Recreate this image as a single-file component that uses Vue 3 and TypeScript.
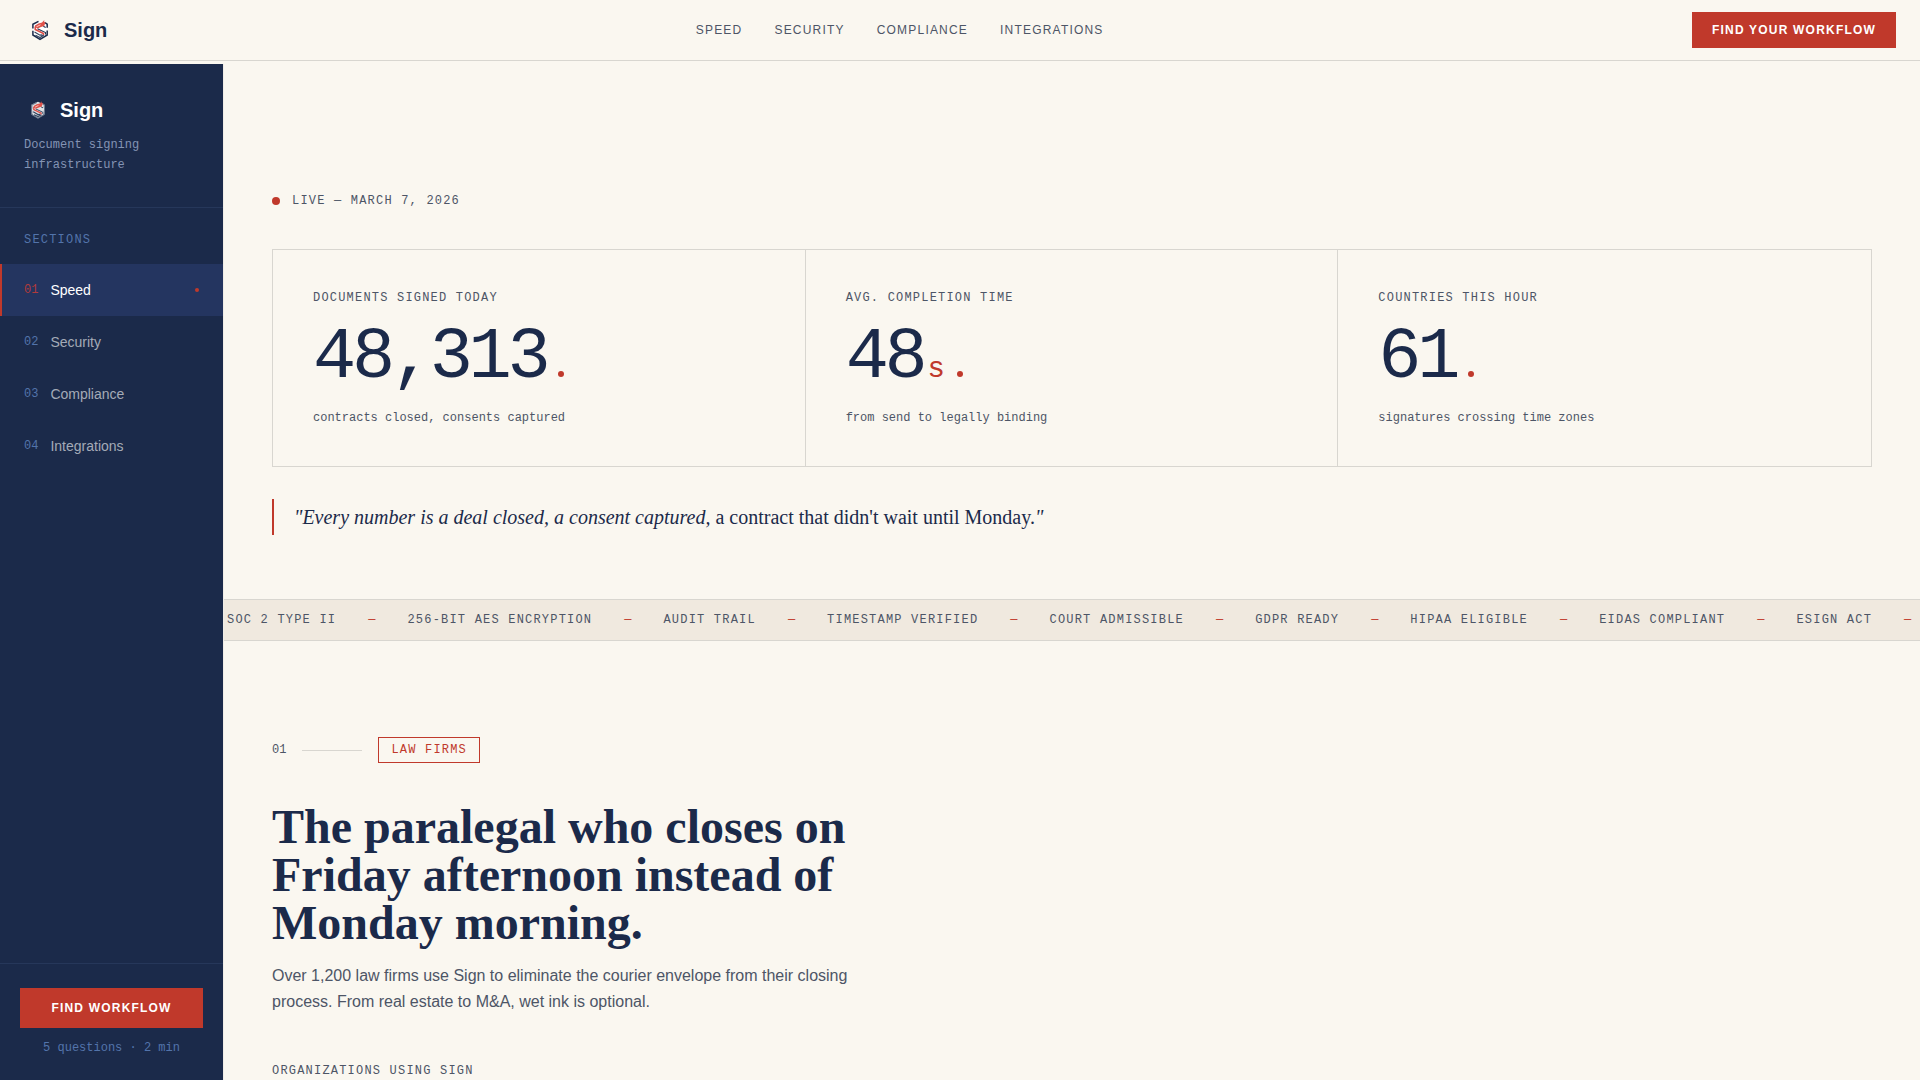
<script setup lang="ts">
interface Section {
  id: string
  num: string
  label: string
}

interface Stat {
  label: string
  value: string
  unit?: string
  note: string
}

const sections: Section[] = [
  { id: 'speed', num: '01', label: 'Speed' },
  { id: 'security', num: '02', label: 'Security' },
  { id: 'compliance', num: '03', label: 'Compliance' },
  { id: 'integrations', num: '04', label: 'Integrations' },
]

const activeId = 'speed'

const stats: Stat[] = [
  { label: 'Documents signed today', value: '48,313', note: 'contracts closed, consents captured' },
  { label: 'Avg. completion time', value: '48', unit: 's', note: 'from send to legally binding' },
  { label: 'Countries this hour', value: '61', note: 'signatures crossing time zones' },
]

const badges: string[] = [
  'SOC 2 Type II',
  '256-bit AES encryption',
  'Audit trail',
  'Timestamp verified',
  'Court admissible',
  'GDPR ready',
  'HIPAA eligible',
  'eIDAS compliant',
  'ESIGN Act',
]
</script>

<template>
  <div class="page">
    <header class="topbar">
      <a class="brand" href="#">
        <svg class="brand-icon" viewBox="0 0 32 32" aria-hidden="true">
          <path d="M16 6.700 23.300 10v10.500L16 25.500l-7.300-5V10Z" fill="#fff" />
          <path d="M8.900 14.500V10.300L14.500 7.300M20.500 8.300l2.700 1.900v3.600M8.900 16.800v4.200L16 25.300l7.200-4.300v-4.500" fill="none" stroke="#1b2a4a" stroke-width="1.500" />
          <path d="M10.500 18 16 21.200l2.500-.4M11.500 21.300 16 23.500l3.800-2.200" fill="none" stroke="#33445f" stroke-width="1.200" />
          <path d="M19.300 12.300l2.400 1.200M13.500 14.800l8 3.800v1.900" fill="none" stroke="#26354f" stroke-width="1.100" />
          <path d="M11.200 12.500v3l8.300 4v1.500" fill="none" stroke="#dd4b44" stroke-width="1.500" />
          <path d="M11 13.200V11.500L14.500 9.500 18 8.500 20.300 6l-.2 2.300 1.500-.3L20.200 12l-3.200 1-3.500 1.500Z" fill="#e0524a" />
          <path d="M12.500 12.800 16.500 10.800" stroke="#fbd9d4" stroke-width=".9" />
        </svg>
        <span>Sign</span>
      </a>
      <nav class="topnav" aria-label="Primary">
        <a v-for="s in sections" :key="s.id" :href="'#' + s.id">{{ s.label }}</a>
      </nav>
      <button class="cta" type="button">Find your workflow</button>
    </header>

    <div class="body">
      <aside class="sidebar">
        <div class="side-head">
          <a class="brand side-brand" href="#">
            <svg class="brand-icon small" viewBox="0 0 32 32" aria-hidden="true">
              <path d="M16 6.700 23.300 10v10.500L16 25.500l-7.300-5V10Z" fill="#dfe2e6" />
              <path d="M8.900 14.500V10.300L14.500 7.300M20.500 8.300l2.700 1.900v3.600M8.900 16.800v4.200L16 25.300l7.200-4.300v-4.500" fill="none" stroke="#6f7c90" stroke-width="1.300" />
              <path d="M10.500 18 16 21.200l2.500-.4M11.500 21.300 16 23.500l3.800-2.200" fill="none" stroke="#33445f" stroke-width="1.300" />
              <path d="M19.300 12.300l2.400 1.200M13.500 14.800l8 3.800v1.900" fill="none" stroke="#33445f" stroke-width="1.100" />
              <path d="M11.200 12.500v3l8.300 4v1.500" fill="none" stroke="#dd4b44" stroke-width="1.500" />
              <path d="M11 13.200V11.500L14.500 9.500 18 8.500 20.300 6l-.2 2.300 1.500-.3L20.200 12l-3.200 1-3.500 1.500Z" fill="#e0524a" />
              <path d="M12.500 12.800 16.500 10.800" stroke="#fbd9d4" stroke-width=".9" />
            </svg>
            <span>Sign</span>
          </a>
          <p class="tagline">Document signing infrastructure</p>
        </div>
        <nav class="side-nav" aria-label="Sections">
          <p class="side-title">Sections</p>
          <a
            v-for="s in sections"
            :key="s.id"
            :href="'#' + s.id"
            class="side-link"
            :class="{ active: s.id === activeId }"
          >
            <span class="num">{{ s.num }}</span>
            <span>{{ s.label }}</span>
            <i v-if="s.id === activeId" class="marker"></i>
          </a>
        </nav>
        <div class="side-foot">
          <button class="cta wide" type="button">Find workflow</button>
          <p>5 questions · 2 min</p>
        </div>
      </aside>

      <main class="main">
        <section class="hero">
          <p class="live"><i class="live-dot"></i>Live — March 7, 2026</p>
          <div class="stats">
            <article v-for="s in stats" :key="s.label" class="stat">
              <h2 class="label">{{ s.label }}</h2>
              <p class="value">{{ s.value }}<span v-if="s.unit" class="unit">{{ s.unit }}</span><i class="dot"></i></p>
              <p class="note">{{ s.note }}</p>
            </article>
          </div>
          <blockquote class="quote">"Every number is a deal closed, a consent captured, <em>a contract that didn't wait until Monday.</em>"</blockquote>
        </section>

        <div class="ticker">
          <template v-for="b in badges" :key="b">
            <span class="badge">{{ b }}</span>
            <span class="dash">—</span>
          </template>
        </div>

        <section class="story">
          <div class="story-meta">
            <span>01</span>
            <i class="rule"></i>
            <span class="tag">Law firms</span>
          </div>
          <h1>The paralegal who closes on Friday afternoon instead of Monday morning.</h1>
          <p class="lead">Over 1,200 law firms use Sign to eliminate the courier envelope from their closing process. From real estate to M&amp;A, wet ink is optional.</p>
          <h2 class="label">Organizations using Sign</h2>
        </section>
      </main>
    </div>
  </div>
</template>

<style>
body {
  margin: 0;
  background: #faf7f0;
}
</style>

<style scoped>
.page {
  --navy: #1b2a4a;
  --red: #c0392b;
  --cream: #faf7f0;
  --line: #d8d6d0;
  --slate: #4d5566;
  --blue: #5374ab;
  --mono: "Liberation Mono", monospace;
  --sans: "Liberation Sans", sans-serif;
  --serif: "Liberation Serif", serif;
  min-height: 100vh;
  background: var(--cream);
  color: var(--navy);
  font-family: var(--sans);
}

p,
h1,
h2,
blockquote {
  margin: 0;
}

a {
  color: inherit;
  text-decoration: none;
}

.topbar {
  position: sticky;
  top: 0;
  z-index: 2;
  box-sizing: border-box;
  height: 61px;
  margin-bottom: 3px;
  padding: 0 24px;
  display: flex;
  justify-content: space-between;
  align-items: center;
  background: var(--cream);
  border-bottom: 1px solid var(--line);
}

.brand {
  display: flex;
  align-items: center;
  gap: 8px;
  font-size: 20px;
  line-height: 24px;
  font-weight: 700;
}

.brand-icon {
  width: 32px;
  height: 32px;
}

.brand-icon.small {
  width: 28px;
  height: 28px;
}

.topnav {
  display: flex;
  gap: 32px;
  font-size: 12px;
  line-height: 18px;
  letter-spacing: 0.1em;
  text-transform: uppercase;
  color: var(--slate);
}

.cta {
  height: 36px;
  padding: 0 20px;
  border: 0;
  background: var(--red);
  color: #fff;
  font: 700 12px/16px var(--sans);
  letter-spacing: 0.1em;
  text-transform: uppercase;
  cursor: pointer;
}

.cta.wide {
  width: 100%;
  height: 40px;
}

.body {
  display: flex;
}

.sidebar {
  position: sticky;
  top: 64px;
  box-sizing: border-box;
  flex: none;
  width: 224px;
  height: calc(100vh - 64px);
  display: flex;
  flex-direction: column;
  background: var(--navy);
  border-right: 1px solid #efece6;
}

.side-head {
  padding: 32px 24px;
  border-bottom: 1px solid #26375a;
}

.side-brand {
  color: #fff;
  line-height: 28px;
}

.tagline {
  margin-top: 11px;
  font: 12px/20px var(--mono);
  color: #8494b4;
}

.side-nav {
  flex: 1;
  padding-top: 23px;
}

.side-title {
  padding: 0 24px;
  margin-bottom: 15px;
  font: 12px/18px var(--mono);
  letter-spacing: 0.1em;
  text-transform: uppercase;
  color: var(--blue);
}

.side-link {
  display: flex;
  align-items: center;
  gap: 12px;
  height: 52px;
  padding: 0 24px 0 22px;
  border-left: 2px solid transparent;
  font-size: 14px;
  line-height: 20px;
  color: #a4aab7;
}

.num {
  font: 12px/20px var(--mono);
  color: var(--blue);
}

.side-link.active {
  background: #243560;
  border-left-color: var(--red);
  color: #fff;
}

.side-link.active .num {
  color: #b03a3c;
}

.marker {
  width: 4px;
  height: 4px;
  margin-left: auto;
  border-radius: 50%;
  background: var(--red);
}

.side-foot {
  padding: 24px 20px 23px;
  border-top: 1px solid #26375a;
  text-align: center;
}

.side-foot p {
  margin-top: 11px;
  font: 12px/18px var(--mono);
  color: var(--blue);
}

.main {
  flex: 1;
  min-width: 0;
}

.hero {
  padding: 128px 48px 64px;
}

.live {
  display: flex;
  align-items: center;
  gap: 12px;
  margin-bottom: 39px;
  font: 12px/18px var(--mono);
  letter-spacing: 0.1em;
  text-transform: uppercase;
  color: var(--slate);
}

.live-dot {
  width: 8px;
  height: 8px;
  border-radius: 50%;
  background: var(--red);
}

.stats {
  display: grid;
  grid-template-columns: repeat(3, 1fr);
  border: 1px solid var(--line);
}

.stat {
  padding: 40px;
  border-right: 1px solid var(--line);
}

.stat:last-child {
  border-right: 0;
}

.label {
  font: 400 12px/16px var(--mono);
  letter-spacing: 0.1em;
  text-transform: uppercase;
  color: var(--slate);
}

.value {
  margin: 16px 0;
  font: 72px/72px var(--mono);
  letter-spacing: -0.06em;
}

.unit {
  margin-left: 4px;
  font-size: 29px;
  line-height: 29px;
  letter-spacing: 0;
  color: var(--red);
}

.dot {
  display: inline-block;
  width: 6px;
  height: 6px;
  margin-left: 12px;
  border-radius: 50%;
  background: var(--red);
}

.note {
  font: 12px/16px var(--mono);
  color: var(--slate);
}

.quote {
  margin-top: 32px;
  padding-left: 20px;
  border-left: 2px solid var(--red);
  font: italic 20px/36px var(--serif);
}

.quote em {
  font-style: normal;
}

.ticker {
  display: flex;
  gap: 32px;
  padding: 11px 0 11px 3px;
  overflow: hidden;
  white-space: nowrap;
  background: #f0e9df;
  border-top: 1px solid var(--line);
  border-bottom: 1px solid var(--line);
  font: 12px/18px var(--mono);
  color: var(--slate);
}

.badge {
  letter-spacing: 0.1em;
  text-transform: uppercase;
}

.dash {
  color: var(--red);
}

.story {
  padding: 96px 48px 0;
}

.story-meta {
  display: flex;
  align-items: center;
  gap: 16px;
  margin-bottom: 40px;
  font: 12px/16px var(--mono);
  color: var(--slate);
}

.rule {
  width: 60px;
  height: 1px;
  background: var(--line);
}

.tag {
  padding: 4px 12px;
  border: 1px solid var(--red);
  letter-spacing: 0.1em;
  text-transform: uppercase;
  color: var(--red);
}

h1 {
  max-width: 600px;
  margin-bottom: 16px;
  font: 700 48px/48px var(--serif);
}

.lead {
  max-width: 600px;
  margin-bottom: 48px;
  font-size: 16px;
  line-height: 26px;
  color: var(--slate);
}
</style>
